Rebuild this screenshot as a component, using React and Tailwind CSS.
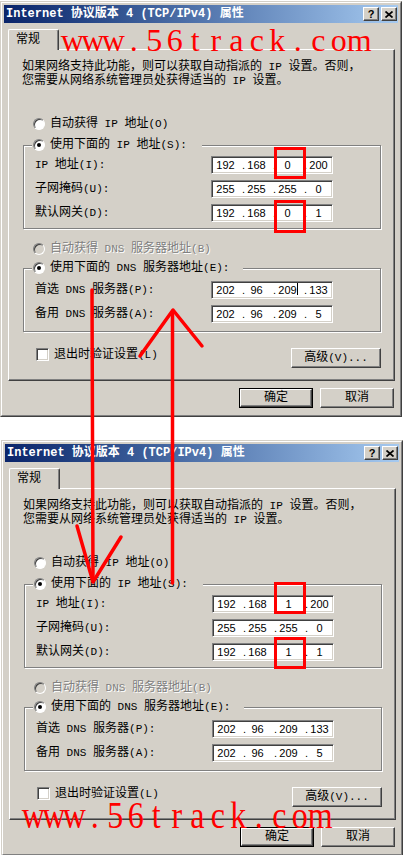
import React from 'react';

const RAISED =
  'border border-t-white border-l-white border-r-[#404040] border-b-[#404040] shadow-[inset_-1px_-1px_0_#808080]';
const SUNKEN =
  'border border-t-[#808080] border-l-[#808080] border-r-white border-b-white shadow-[inset_1px_1px_0_#404040,inset_-1px_-1px_0_#d4d0c8]';

// SimSun-like text: latin runs are half-width, so they are set a little smaller
function T({ children }) {
  return children.split(/([\u0000-\u00ff]+)/).map((part, i) =>
    /^[\u0000-\u00ff]+$/.test(part) ? (
      <span key={i} className="text-[11px] whitespace-pre">
        {part}
      </span>
    ) : (
      part
    )
  );
}

function Radio({ checked, disabled }) {
  return (
    <span
      className={`relative inline-block shrink-0 w-3 h-3 rounded-full border border-t-[#808080] border-l-[#808080] border-r-white border-b-white shadow-[inset_1px_1px_0_#404040] ${
        disabled ? 'bg-[#d4d0c8]' : 'bg-white'
      }`}
    >
      {checked && <span className="absolute left-[3px] top-[3px] w-1 h-1 rounded-full bg-black" />}
    </span>
  );
}

function IpBox({ parts, cursor }) {
  return (
    <div className={`w-[122px] h-[18px] bg-white ${SUNKEN}`}>
      <div className="flex items-center h-full pl-[2px] font-['Liberation_Sans',Arial,sans-serif] text-[11px] leading-none text-black">
        {parts.map((p, i) => (
          <React.Fragment key={i}>
            <span className="relative w-[23px] flex justify-center">
              {p}
              {cursor && i === 2 && <span className="absolute left-[21px] -top-[2px] w-px h-[12px] bg-black" />}
            </span>
            {i < 3 && <span className="w-[8px] text-right">.</span>}
          </React.Fragment>
        ))}
      </div>
    </div>
  );
}

function IpRow({ label, parts, cursor }) {
  return (
    <div className="flex items-center h-[18px]">
      <div className="w-[187px] pl-[11px]">
        <T>{label}</T>
      </div>
      <IpBox parts={parts} cursor={cursor} />
    </div>
  );
}

function Group({ legend, legendW, className, children }) {
  return (
    <div
      className={`relative ml-[14px] w-[358px] border border-[#808080] shadow-[inset_1px_1px_0_white,1px_1px_0_white] flex flex-col gap-[6px] ${className}`}
    >
      <div className={`absolute -top-[9px] left-[8px] h-4 pl-px bg-[#d4d0c8] flex items-center gap-[5px] ${legendW}`}>
        <Radio checked />
        <span>
          <T>{legend}</T>
        </span>
      </div>
      {children}
    </div>
  );
}

function TitleBar() {
  return (
    <div className="h-[18px] shrink-0 bg-linear-to-r from-[#0a246a] to-[#a6caf0] flex items-start justify-between">
      <div className="pl-[2px] h-full flex items-center text-white font-bold text-[12px] leading-none whitespace-pre">
        Internet 协议版本 4 (TCP/IPv4) 属性
      </div>
      <div className="flex gap-[2px] pt-[2px] pr-[1px]">
        <div className={`w-4 h-[14px] bg-[#d4d0c8] flex items-center justify-center ${RAISED}`}>
          <span className="font-['Liberation_Sans',Arial,sans-serif] font-bold text-[11px] leading-none text-black">?</span>
        </div>
        <div className={`w-4 h-[14px] bg-[#d4d0c8] flex items-center justify-center ${RAISED}`}>
          <svg width="8" height="7" viewBox="0 0 8 7">
            <path d="M0.5 0.5L7.5 6.5M7.5 0.5L0.5 6.5" stroke="black" strokeWidth="1.7" />
          </svg>
        </div>
      </div>
    </div>
  );
}

function Dialog({ third, cursor, className }) {
  return (
    <div
      className={`w-[402px] h-[416px] bg-[#d4d0c8] border border-t-[#d4d0c8] border-l-[#d4d0c8] border-r-[#404040] border-b-[#404040] ${className}`}
    >
      <div className="h-full border border-t-white border-l-white border-r-[#808080] border-b-[#808080] p-[2px] flex flex-col">
        <TitleBar />

        {/* tab */}
        <div className="relative z-10 mt-[6px] ml-[4px] -mb-px w-[51px] h-[21px] bg-[#d4d0c8] rounded-t-[2px] border-t border-l border-r border-t-white border-l-white border-r-[#404040] shadow-[inset_-1px_0_0_#808080] flex items-center pl-[7px] pb-[1px]">
          常规
        </div>

        {/* tab panel */}
        <div className="ml-[4px] w-[387px] h-[332px] border border-t-white border-l-white border-r-[#404040] border-b-[#404040] shadow-[inset_-1px_-1px_0_#808080] flex flex-col">
          <div className="pt-[10px] pl-[13px] leading-[14px]">
            <div>
              <T>如果网络支持此功能，则可以获取自动指派的 IP 设置。否则，</T>
            </div>
            <div>
              <T>您需要从网络系统管理员处获得适当的 IP 设置。</T>
            </div>
          </div>

          <div className="mt-[28px] h-4 pl-[24px] flex items-center gap-[5px]">
            <Radio />
            <span>
              <T>自动获得 IP 地址(O)</T>
            </span>
          </div>

          <Group legend="使用下面的 IP 地址(S):" legendW="w-[170px]" className="mt-[13px] pt-[10px] pb-[6px]">
            <IpRow label="IP 地址(I):" parts={['192', '168', third, '200']} />
            <IpRow label="子网掩码(U):" parts={['255', '255', '255', '0']} />
            <IpRow label="默认网关(D):" parts={['192', '168', third, '1']} />
          </Group>

          <div className="mt-[12px] h-4 pl-[24px] flex items-center gap-[5px] text-[#808080] [text-shadow:1px_1px_0_white]">
            <Radio disabled />
            <span>
              <T>自动获得 DNS 服务器地址(B)</T>
            </span>
          </div>

          <Group legend="使用下面的 DNS 服务器地址(E):" legendW="w-[211px]" className="mt-[11px] pt-[12px] pb-[8px]">
            <IpRow label="首选 DNS 服务器(P):" parts={['202', '96', '209', '133']} cursor={cursor} />
            <IpRow label="备用 DNS 服务器(A):" parts={['202', '96', '209', '5']} />
          </Group>

          <div className="mt-[16px] h-[20px] pl-[27px] pr-[13px] flex items-start justify-between">
            <div className="flex items-center gap-[5px] h-[13px]">
              <span className={`w-[13px] h-[13px] bg-white ${SUNKEN}`} />
              <span>
                <T>退出时验证设置(L)</T>
              </span>
            </div>
            <div className={`w-[90px] h-[20px] flex items-center justify-center ${RAISED}`}>
              <span>
                <T>高级(V)...</T>
              </span>
            </div>
          </div>
        </div>

        <div className="mt-[7px] pr-[4px] flex justify-end gap-[7px]">
          <div className="w-[74px] h-[20px] border border-black">
            <div className={`h-full flex items-center justify-center ${RAISED}`}>确定</div>
          </div>
          <div className={`w-[74px] h-[20px] flex items-center justify-center ${RAISED}`}>取消</div>
        </div>
      </div>
    </div>
  );
}

function Watermark({ className }) {
  return (
    <div
      className={`absolute flex pointer-events-none font-['Liberation_Serif','Times_New_Roman',serif] text-[32px] leading-[32px] text-[#ff0000] ${className}`}
    >
      {'www.56track.com'.split('').map((c, i) => (
        <span key={i} className="w-[20.5px] flex justify-center">
          {c}
        </span>
      ))}
    </div>
  );
}

export default function App() {
  return (
    <div className="relative w-[404px] h-[855px] overflow-hidden bg-white text-black text-[12px] leading-[14px] font-['Liberation_Mono','Noto_Sans_CJK_SC',monospace]">
      <Dialog third="0" cursor className="mt-px" />
      <Dialog third="1" className="mt-[23px] ml-px" />

      {/* red marks */}
      <div className="absolute top-[147px] left-[274px] w-[32px] h-[32px] border-[3px] border-[#ff0000]" />
      <div className="absolute top-[200px] left-[274px] w-[32px] h-[33px] border-[3px] border-[#ff0000]" />
      <div className="absolute top-[582px] left-[274px] w-[32px] h-[32px] border-[3px] border-[#ff0000]" />
      <div className="absolute top-[637px] left-[274px] w-[32px] h-[32px] border-[3px] border-[#ff0000]" />

      <svg className="absolute left-0 top-0 pointer-events-none" width="404" height="855" viewBox="0 0 404 855">
        <g stroke="#ff0000" strokeWidth="3.5" strokeLinecap="round" strokeLinejoin="round" fill="none">
          <path d="M92 290 L93 580" />
          <path d="M77 526 L93 582 L121 537" />
          <path d="M172.5 312 L172.5 583" />
          <path d="M140 356 L173 310 L202 346" />
        </g>
      </svg>

      <Watermark className="left-[62px] top-[24px]" />
      <Watermark className="left-[23px] top-[799px] scale-y-[1.18]" />
    </div>
  );
}
